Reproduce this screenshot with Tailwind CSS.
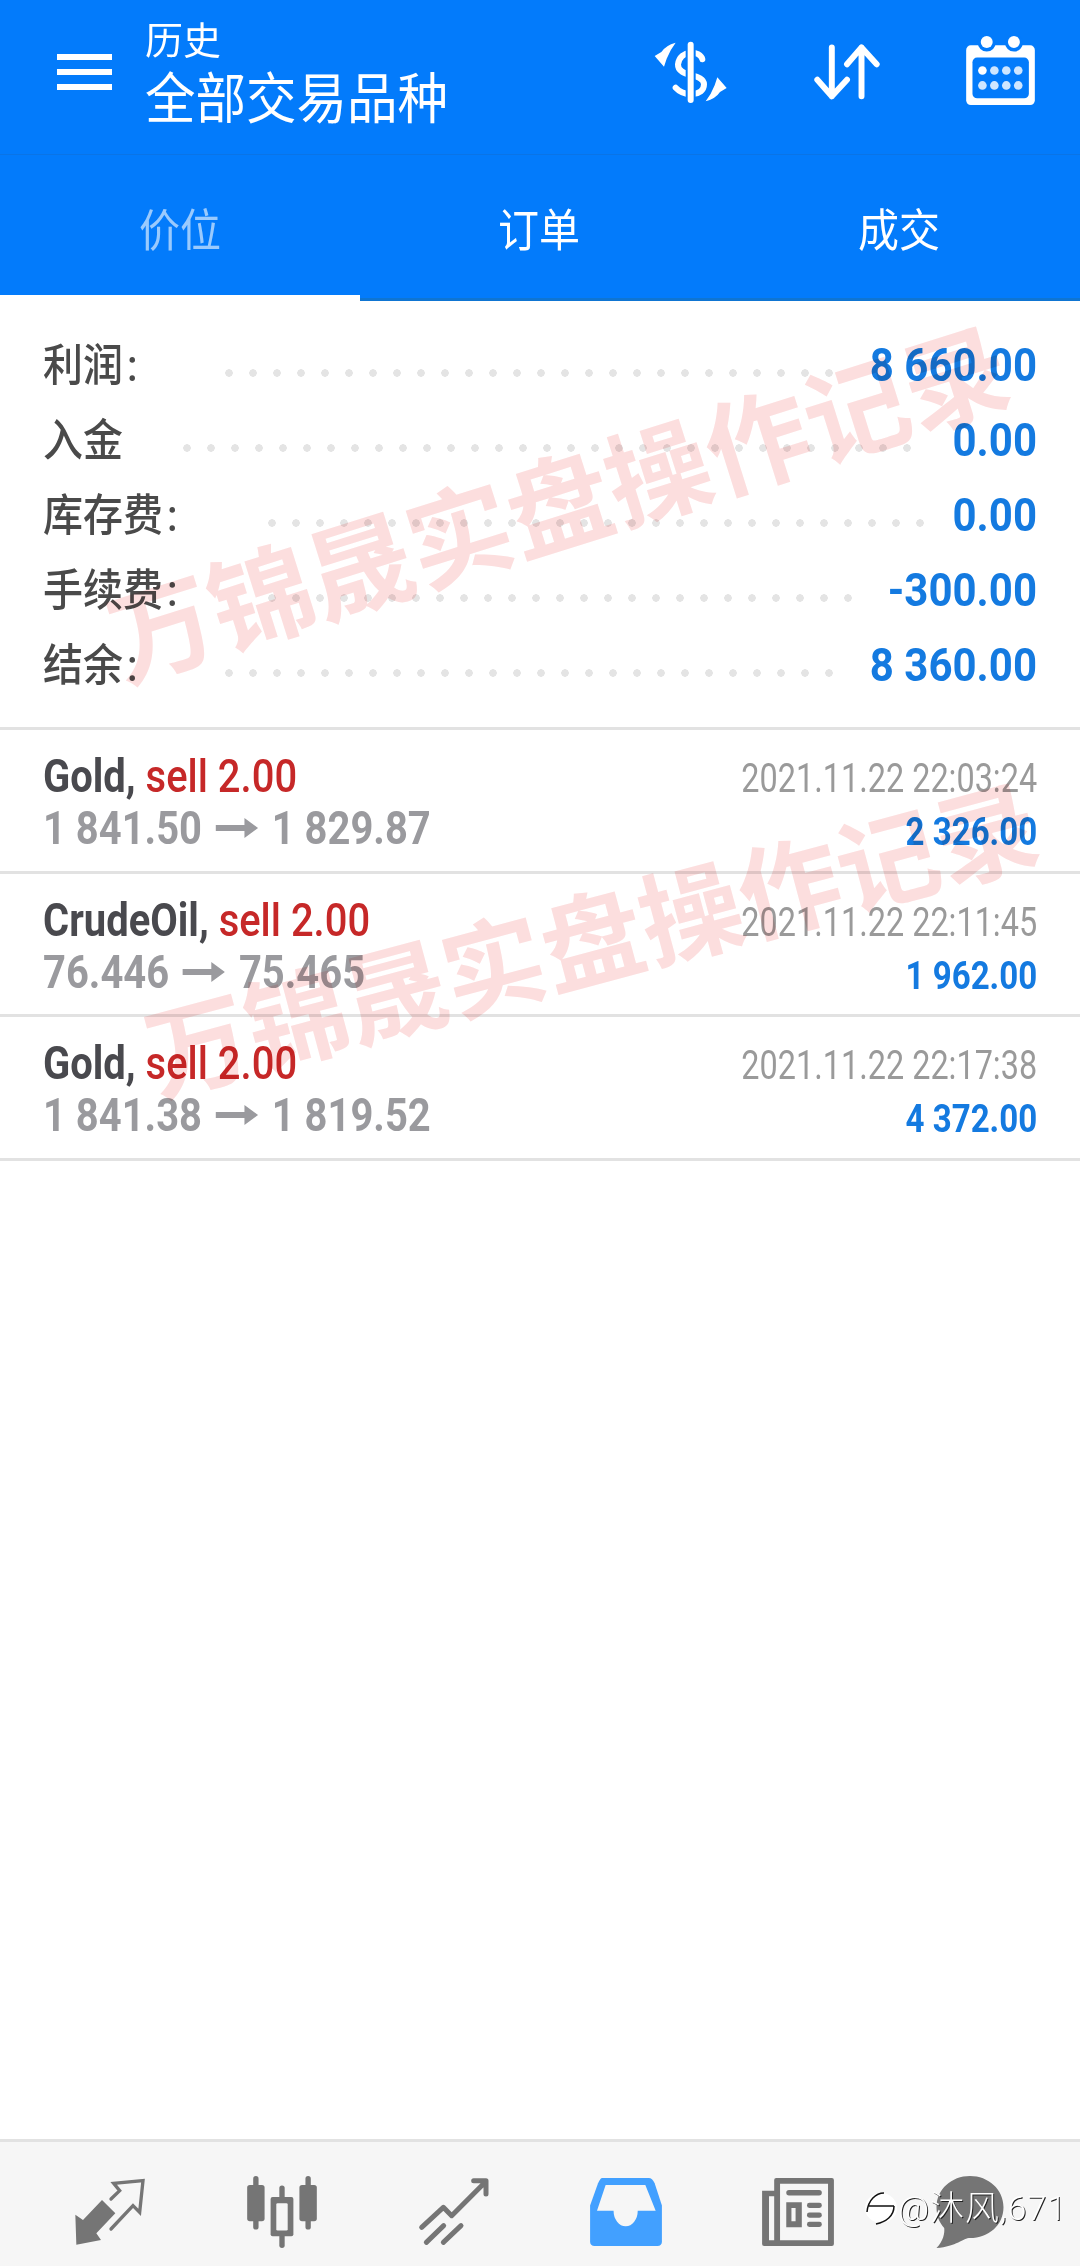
<!DOCTYPE html>
<html lang="zh-CN">
<head>
    <meta charset="UTF-8">
    <meta name="viewport" content="width=device-width, initial-scale=1.0">
    <title>历史</title>
    <script src="https://cdn.jsdelivr.net/npm/@tailwindcss/browser@4"></script>
</head>
<body class="bg-white [font-family:Roboto,'Noto_Sans_CJK_SC',sans-serif]">
<div class="relative w-[1080px] h-[2266px] overflow-hidden flex flex-col">

    <!-- top bar -->
    <header class="h-[155px] shrink-0 bg-[#037bfb] border-b border-[#0a74e6] flex items-center pl-[57px] pr-[45px] pb-[10px] text-white">
        <div class="w-[55px] flex flex-col gap-[9px] shrink-0">
            <div class="h-[6px] bg-white"></div>
            <div class="h-[6px] bg-white"></div>
            <div class="h-[6px] bg-white"></div>
        </div>
        <div class="ml-[33px] mt-[4px]">
            <div class="text-[38px] leading-[50px]">历史</div>
            <div class="text-[50.5px] leading-[60px] pt-[6px] origin-bottom scale-y-[1.08]">全部交易品种</div>
        </div>
        <div class="ml-auto flex items-center gap-[86px]">
            <svg class="w-[74px] h-[62px]" viewBox="100 95 222 186">
                <path fill="none" stroke="#fff" stroke-width="18" stroke-linecap="round" d="M245 150C240 122 178 120 172 165C170 205 250 190 250 225C250 262 190 262 165 235"/>
                <path d="M210 100V270" stroke="#037bfb" stroke-width="30"/>
                <path d="M210 106V272" stroke="#fff" stroke-width="18" stroke-linecap="round"/>
                <path fill="#fff" d="M165 100Q135 108 122 128L102 140L130 172L138 148Q148 122 165 100ZM255 276Q285 268 298 248L318 236L290 204L282 228Q272 254 255 276Z"/>
            </svg>
            <svg class="w-[66px] h-[56px]" viewBox="578 105 200 167">
                <path fill="none" stroke="#fff" stroke-width="18" stroke-linecap="round" stroke-linejoin="round" d="M632 114V262M588 212L632 262L678 212M722 262V114M678 165L722 114L768 165"/>
            </svg>
            <svg class="w-[69px] h-[69px] -mt-[3px]" viewBox="1038 80 207 208">
                <rect x="1038" y="108" width="207" height="180" rx="14" fill="#fff"/>
                <rect x="1057" y="145" width="170" height="123" rx="14" fill="#037bfb"/>
                <circle cx="1100" cy="100" r="27" fill="#037bfb"/>
                <circle cx="1182" cy="100" r="27" fill="#037bfb"/>
                <circle cx="1100" cy="98" r="18" fill="#fff"/>
                <circle cx="1182" cy="98" r="18" fill="#fff"/>
                <g fill="#cfe6ff">
                    <circle cx="1087" cy="184" r="13" fill="#fff"/>
                    <circle cx="1123" cy="184" r="13"/>
                    <circle cx="1159" cy="184" r="13"/>
                    <circle cx="1195" cy="184" r="13"/>
                    <circle cx="1087" cy="229" r="13"/>
                    <circle cx="1123" cy="229" r="13"/>
                    <circle cx="1159" cy="229" r="13"/>
                    <circle cx="1195" cy="229" r="13"/>
                </g>
            </svg>
        </div>
    </header>

    <!-- tabs -->
    <nav class="h-[146px] shrink-0 bg-[#037bfb] flex text-[41px] text-white">
        <div class="w-[360px] border-b-[6px] border-white flex items-center justify-center pt-[16px] text-white/60"><span class="scale-y-[1.1]">价位</span></div>
        <div class="w-[360px] border-b-[3px] border-[#0f75d2] flex items-center justify-center pt-[13px] pr-[2px]"><span class="scale-y-[1.1]">订单</span></div>
        <div class="w-[360px] border-b-[3px] border-[#0f75d2] flex items-center justify-center pt-[13px] pr-[2px]"><span class="scale-y-[1.1]">成交</span></div>
    </nav>

    <!-- totals -->
    <section class="h-[429px] shrink-0 pt-[27px] pl-[43px] pr-[43px] border-b-[3px] border-[#e2e2e2] text-[#4a4a4a] text-[40px]">
        <div class="h-[75px] flex items-center">
            <span class="w-[174px] shrink-0 font-medium scale-y-[1.12]">利润<span class="ml-[4px]">:</span></span>
            <span class="w-[624px] h-[10px] mt-[14px] bg-[radial-gradient(circle_at_center,#e4e4e4_3.5px,transparent_4px)] bg-[length:24px_10px]"></span>
            <span class="ml-auto text-[42px] font-bold text-[#147ae0] origin-right scale-y-[1.1]">8 660.00</span>
        </div>
        <div class="h-[75px] flex items-center">
            <span class="w-[132px] shrink-0 font-medium scale-y-[1.12]">入金</span>
            <span class="w-[744px] h-[10px] mt-[14px] bg-[radial-gradient(circle_at_center,#e4e4e4_3.5px,transparent_4px)] bg-[length:24px_10px]"></span>
            <span class="ml-auto text-[42px] font-bold text-[#147ae0] origin-right scale-y-[1.1]">0.00</span>
        </div>
        <div class="h-[75px] flex items-center">
            <span class="w-[217px] shrink-0 font-medium scale-y-[1.12]">库存费<span class="ml-[4px]">:</span></span>
            <span class="w-[672px] h-[10px] mt-[14px] bg-[radial-gradient(circle_at_center,#e4e4e4_3.5px,transparent_4px)] bg-[length:24px_10px]"></span>
            <span class="ml-auto text-[42px] font-bold text-[#147ae0] origin-right scale-y-[1.1]">0.00</span>
        </div>
        <div class="h-[75px] flex items-center">
            <span class="w-[217px] shrink-0 font-medium scale-y-[1.12]">手续费<span class="ml-[4px]">:</span></span>
            <span class="w-[600px] h-[10px] mt-[14px] bg-[radial-gradient(circle_at_center,#e4e4e4_3.5px,transparent_4px)] bg-[length:24px_10px]"></span>
            <span class="ml-auto text-[42px] font-bold text-[#147ae0] origin-right scale-y-[1.1]">-300.00</span>
        </div>
        <div class="h-[75px] flex items-center">
            <span class="w-[174px] shrink-0 font-medium scale-y-[1.12]">结余<span class="ml-[4px]">:</span></span>
            <span class="w-[624px] h-[10px] mt-[14px] bg-[radial-gradient(circle_at_center,#e4e4e4_3.5px,transparent_4px)] bg-[length:24px_10px]"></span>
            <span class="ml-auto text-[42px] font-bold text-[#147ae0] origin-right scale-y-[1.1]">8 360.00</span>
        </div>
    </section>

    <!-- deals -->
    <section class="shrink-0">
        <div class="h-[143.5px] border-b-[3px] border-[#e2e2e2] px-[43px] pt-[18px] flex justify-between">
            <div>
                <div class="h-[55px] text-[47px] leading-[55px] whitespace-nowrap origin-left scale-x-[.85]"><span class="font-bold text-[#49494e]">Gold,</span> <span class="font-medium text-[#c62828]">sell 2.00</span></div>
                <div class="h-[50px] text-[47px] leading-[50px] font-bold text-[#9a9a9e] whitespace-nowrap origin-left scale-x-[.85] flex items-center">1 841.50<svg class="w-[50px] h-[24px] mx-[16px]" viewBox="0 0 50 24"><path fill="#9a9a9e" d="M0 9H34V2L50 12L34 22V15H0Z"/></svg>1 829.87</div>
            </div>
            <div class="text-right">
                <div class="h-[55px] text-[40px] leading-[62px] text-[#9a9a9a] whitespace-nowrap origin-right scale-x-[.81]">2021.11.22 22:03:24</div>
                <div class="h-[50px] text-[38px] leading-[58px] font-bold text-[#147ae0] whitespace-nowrap origin-right scale-x-[.87]">2 326.00</div>
            </div>
        </div>
        <div class="h-[143.5px] border-b-[3px] border-[#e2e2e2] px-[43px] pt-[18px] flex justify-between">
            <div>
                <div class="h-[55px] text-[47px] leading-[55px] whitespace-nowrap origin-left scale-x-[.85]"><span class="font-bold text-[#49494e]">CrudeOil,</span> <span class="font-medium text-[#c62828]">sell 2.00</span></div>
                <div class="h-[50px] text-[47px] leading-[50px] font-bold text-[#9a9a9e] whitespace-nowrap origin-left scale-x-[.85] flex items-center">76.446<svg class="w-[50px] h-[24px] mx-[16px]" viewBox="0 0 50 24"><path fill="#9a9a9e" d="M0 9H34V2L50 12L34 22V15H0Z"/></svg>75.465</div>
            </div>
            <div class="text-right">
                <div class="h-[55px] text-[40px] leading-[62px] text-[#9a9a9a] whitespace-nowrap origin-right scale-x-[.81]">2021.11.22 22:11:45</div>
                <div class="h-[50px] text-[38px] leading-[58px] font-bold text-[#147ae0] whitespace-nowrap origin-right scale-x-[.87]">1 962.00</div>
            </div>
        </div>
        <div class="h-[143.5px] border-b-[3px] border-[#e2e2e2] px-[43px] pt-[18px] flex justify-between">
            <div>
                <div class="h-[55px] text-[47px] leading-[55px] whitespace-nowrap origin-left scale-x-[.85]"><span class="font-bold text-[#49494e]">Gold,</span> <span class="font-medium text-[#c62828]">sell 2.00</span></div>
                <div class="h-[50px] text-[47px] leading-[50px] font-bold text-[#9a9a9e] whitespace-nowrap origin-left scale-x-[.85] flex items-center">1 841.38<svg class="w-[50px] h-[24px] mx-[16px]" viewBox="0 0 50 24"><path fill="#9a9a9e" d="M0 9H34V2L50 12L34 22V15H0Z"/></svg>1 819.52</div>
            </div>
            <div class="text-right">
                <div class="h-[55px] text-[40px] leading-[62px] text-[#9a9a9a] whitespace-nowrap origin-right scale-x-[.81]">2021.11.22 22:17:38</div>
                <div class="h-[50px] text-[38px] leading-[58px] font-bold text-[#147ae0] whitespace-nowrap origin-right scale-x-[.87]">4 372.00</div>
            </div>
        </div>
    </section>

    <div class="flex-1"></div>

    <!-- bottom bar -->
    <footer class="h-[127px] shrink-0 bg-[#f6f6f6] border-t-[3px] border-[#e2e2e2] flex items-center px-[24px] pt-[15px]">
        <div class="w-[172px] flex justify-center">
            <svg class="w-[72px] h-[68px]" viewBox="212 172 214 204">
                <path fill="#757575" d="M215 282L238 298L295 238L335 278L278 338L292 358L218 372Z"/>
                <path fill="none" stroke="#757575" stroke-width="10" stroke-linecap="round" d="M322 235L348 210L330 188L418 180L408 275L388 255L322 325"/>
            </svg>
        </div>
        <div class="w-[172px] flex justify-center">
            <svg class="w-[72px] h-[72px]" viewBox="715 165 208 215">
                <g fill="#757575">
                    <rect x="733" y="165" width="16" height="160" rx="8"/>
                    <rect x="715" y="192" width="52" height="108" rx="8"/>
                    <rect x="889" y="165" width="16" height="160" rx="8"/>
                    <rect x="871" y="192" width="52" height="108" rx="8"/>
                    <rect x="811" y="193" width="16" height="187" rx="8"/>
                    <rect x="785" y="228" width="68" height="117" rx="6"/>
                </g>
                <rect x="802" y="246" width="34" height="82" rx="4" fill="#f6f6f6"/>
            </svg>
        </div>
        <div class="w-[172px] flex justify-center">
            <svg class="w-[72px] h-[68px]" viewBox="1213 172 212 204">
                <path fill="none" stroke="#757575" stroke-width="15" stroke-linecap="round" stroke-linejoin="round" d="M1222 320L1287 260L1312 285L1410 187M1378 180H1415V220M1236 365L1288 315M1287 365L1340 315"/>
            </svg>
        </div>
        <div class="w-[172px] flex justify-center">
            <svg class="w-[72px] h-[68px]" viewBox="145 175 208 197">
                <path fill="#42a0ff" d="M180 175H315Q325 175 332 190L353 255V360Q353 372 340 372H158Q145 372 145 360V255L168 190Q175 175 180 175Z"/>
                <path fill="#f6f6f6" d="M190 195H305L335 270H283A35 45 0 0 1 213 270H165Z"/>
            </svg>
        </div>
        <div class="w-[172px] flex justify-center">
            <svg class="w-[72px] h-[68px]" viewBox="645 175 208 197">
                <path fill="#757575" d="M686 175H847Q853 175 853 181V366Q853 372 847 372H651Q645 372 645 366V212H680V181Q680 175 686 175Z"/>
                <path fill="#f6f6f6" d="M697 192H836V355H697ZM665 228H680V355H665Z"/>
                <g fill="#757575">
                    <rect x="715" y="210" width="103" height="16" rx="8"/>
                    <path fill-rule="evenodd" d="M715 245H760V318H715ZM730 262V300H742V262Z"/>
                    <rect x="775" y="247" width="43" height="15" rx="7"/>
                    <rect x="775" y="275" width="43" height="15" rx="7"/>
                    <rect x="775" y="302" width="43" height="15" rx="7"/>
                </g>
            </svg>
        </div>
        <div class="w-[172px] flex justify-center">
            <svg class="w-[70px] h-[72px]" viewBox="1145 165 200 215">
                <path fill="#757575" d="M1245 165C1300 165 1345 205 1345 258C1345 312 1300 350 1245 350C1225 350 1205 375 1145 380C1165 360 1170 335 1168 320C1152 302 1145 282 1145 258C1145 205 1190 165 1245 165Z"/>
            </svg>
        </div>
    </footer>

    <!-- red stamp over the content -->
    <div class="absolute left-[92px] top-[456px] text-[104px] leading-none font-bold text-[#fcdede] mix-blend-multiply whitespace-nowrap origin-center -rotate-[17.5deg] pointer-events-none">万锦晟实盘操作记录</div>
    <div class="absolute left-[134px] top-[892px] text-[102px] leading-none font-bold text-[#fcdede] mix-blend-multiply whitespace-nowrap origin-center -rotate-[15deg] pointer-events-none">万锦晟实盘操作记录</div>

    <!-- weibo handle -->
    <div class="absolute left-[864px] top-[2186px] flex items-center text-white [text-shadow:1px_1px_0_#222] text-[34px] leading-[44px] tracking-[1px] font-light whitespace-nowrap pointer-events-none">
        <svg class="w-[34px] h-[40px]" viewBox="0 0 34 40">
            <ellipse cx="17" cy="20" rx="16" ry="15" fill="#fff"/>
            <path fill="none" stroke="#111" stroke-width="1.5" d="M3 24C4 12 12 5 20 5M5 18H30M30 18C30 28 22 34 12 36"/>
        </svg>
        <span>@沐风,671</span>
    </div>
</div>
</body>
</html>
